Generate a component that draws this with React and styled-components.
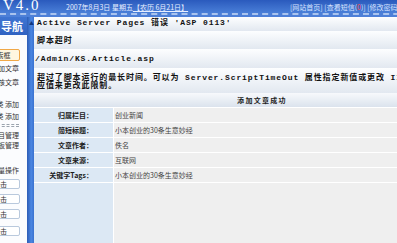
import React from 'react'
import styled, { createGlobalStyle } from 'styled-components'

const GlobalStyle = createGlobalStyle`
html, body {
margin: 0;
padding: 0;
background: #ffffff;
overflow: hidden;
}
body {
font-family: "Noto Sans CJK SC", "Liberation Sans", sans-serif;
}
`

const Page = styled.div`
width: 490px;
height: 243px;
display: flex;
flex-direction: column;
`
const TopBar = styled.div`
height: 13px;
display: flex;
align-items: center;
background: linear-gradient(#2a5abd, #4a7fd8);
color: #e6eeff;
font-size: 7px;
white-space: nowrap;
overflow: hidden;
`
const Version = styled.div`
font-family: "Liberation Serif", serif;
font-size: 15px;
line-height: 13px;
letter-spacing: 2px;
color: #ffffff;
padding-left: 3px;
width: 63px;
margin-top: -3px;
`
const DateText = styled.div`
width: 224px;
span {
text-decoration: underline;
}
`
const Links = styled.div`
color: #d7e4ff;
b {
color: #ff4d4d;
font-weight: normal;
}
`
const DashBand = styled.div`
height: 4px;
background: #4d80d8;
border-top: 2px dashed #aac4ee;
box-sizing: border-box;
`
const Body = styled.div`
flex: 1;
display: flex;
min-height: 0;
`
const Sidebar = styled.div`
width: 27px;
flex-shrink: 0;
overflow: hidden;
background: #fbfcfe;
`
const SideInner = styled.div`
margin-left: -40px;
width: 67px;
padding-right: 8px;
box-sizing: border-box;
text-align: right;
font-size: 7px;
color: #333;
white-space: nowrap;
`
const SideHead = styled.div`
height: 18px;
line-height: 18px;
margin-right: -8px;
padding-right: 4px;
background: linear-gradient(#3f75d2, #2f62c2);
color: #ffffff;
font-weight: bold;
font-size: 11px;
`
const SideItem = styled.div`
margin-top: ${(props) => props.$mt}px;
line-height: 10px;
height: 10px;
`
const SideBox = styled.div`
margin: ${(props) => props.$mt}px -1px 0 auto;
width: 40px;
height: ${(props) => props.$h}px;
line-height: ${(props) => props.$h - 2}px;
box-sizing: border-box;
text-align: center;
border: 1px solid ${(props) => props.$orange ? '#f0a848' : '#b9c9dd'};
background: ${(props) => props.$orange ? '#fff6df' : '#ffffff'};
border-radius: 2px;
`
const SideDash = styled.div`
margin: 3px 0 0 auto;
width: 22px;
height: 1px;
border-top: 1px dashed #9aa3ad;
border-bottom: 1px dashed #9aa3ad;
`
const Rail = styled.div`
width: 7px;
flex-shrink: 0;
background: linear-gradient(90deg, #2d5db6, #4a86e2 60%, #3a72cf);
color: #10367c;
font-size: 5px;
line-height: 5px;
text-align: right;
padding-top: 3px;
box-sizing: border-box;
`
const Main = styled.div`
flex: 1;
display: flex;
flex-direction: column;
min-width: 0;
`
const ErrBlock = styled.div`
padding: ${(props) => props.$pad};
font-family: "Liberation Mono", "Noto Sans CJK SC", monospace;
font-weight: bold;
font-size: 8px;
letter-spacing: 0.9px;
line-height: ${(props) => props.$lh || 10}px;
color: #111;
white-space: nowrap;
background: linear-gradient(#fdfeff, #e2e8f0);
`
const Table = styled.div`
flex: 1;
display: grid;
grid-template-columns: 79px 1fr;
grid-template-rows: 14px repeat(5, 14px) 1fr;
row-gap: 1px;
column-gap: 1px;
background: #ffffff;
`
const HeadCell = styled.div`
grid-column: 1 / -1;
background: linear-gradient(#f7f9fc, #dbe3ed);
text-align: center;
font-weight: bold;
font-size: 7px;
letter-spacing: 1.3px;
line-height: 14px;
color: #222;
`
const Label = styled.div`
background: #dce8f4;
text-align: right;
padding-right: 20px;
font-weight: bold;
font-size: 7px;
line-height: 14px;
color: #1a1a1a;
white-space: nowrap;
`
const Value = styled.div`
background: #efefef;
padding-left: 1px;
font-size: 7px;
line-height: 14px;
color: #444;
white-space: nowrap;
`

const rows = [
    ['归属栏目：', '创业新闻'],
    ['简短标题：', '小本创业的30条生意妙经'],
    ['文章作者：', '佚名'],
    ['文章来源：', '互联网'],
    ['关键字Tags：', '小本创业的30条生意妙经'],
]

export default function App() {
    return (
        <Page>
            <GlobalStyle />
            <TopBar>
                <Version>V4.0</Version>
                <DateText>2007年8月3日 星期五<span>【农历 6月21日】</span></DateText>
                <Links>[网站首页] [查看短信(<b>0</b>)] [修改密码] [退出]</Links>
            </TopBar>
            <DashBand />
            <Body>
                <Sidebar>
                    <SideInner>
                        <SideHead>栏目导航</SideHead>
                        <SideBox $mt={14} $h={12} $orange>搜索框</SideBox>
                        <SideItem $mt={2}>添加文章</SideItem>
                        <SideItem $mt={4}>审核文章</SideItem>
                        <SideItem $mt={12}>分类 添加</SideItem>
                        <SideItem $mt={2}>分类 添加</SideItem>
                        <SideDash />
                        <SideItem $mt={3}>栏目管理</SideItem>
                        <SideItem $mt={0}>模板管理</SideItem>
                        <SideItem $mt={15}>批量操作</SideItem>
                        <SideBox $mt={4} $h={10}>点击</SideBox>
                        <SideBox $mt={5} $h={10}>点击</SideBox>
                        <SideBox $mt={5} $h={10}>点击</SideBox>
                        <SideBox $mt={7} $h={10}>点击</SideBox>
                    </SideInner>
                </Sidebar>
                <Rail>▲</Rail>
                <Main>
                    <ErrBlock $pad="1px 3px 3px">Active Server Pages 错误 'ASP 0113'</ErrBlock>
                    <ErrBlock $pad="5px 3px 3px">脚本超时</ErrBlock>
                    <ErrBlock $pad="5px 3px 4px 1px">/Admin/KS.Article.asp</ErrBlock>
                    <ErrBlock $pad="6px 3px 3px" $lh={8}>
                        超过了脚本运行的最长时间。可以为 Server.ScriptTimeOut 属性指定新值或更改 IIS 管理工具中的相<br />
                        应值来更改此限制。
                    </ErrBlock>
                    <Table>
                        <HeadCell>添加文章成功</HeadCell>
                        {rows.map((r) => (
                            <React.Fragment key={r[0]}>
                                <Label>{r[0]}</Label>
                                <Value>{r[1]}</Value>
                            </React.Fragment>
                        ))}
                        <Label />
                        <Value />
                    </Table>
                </Main>
            </Body>
        </Page>
    )
}
